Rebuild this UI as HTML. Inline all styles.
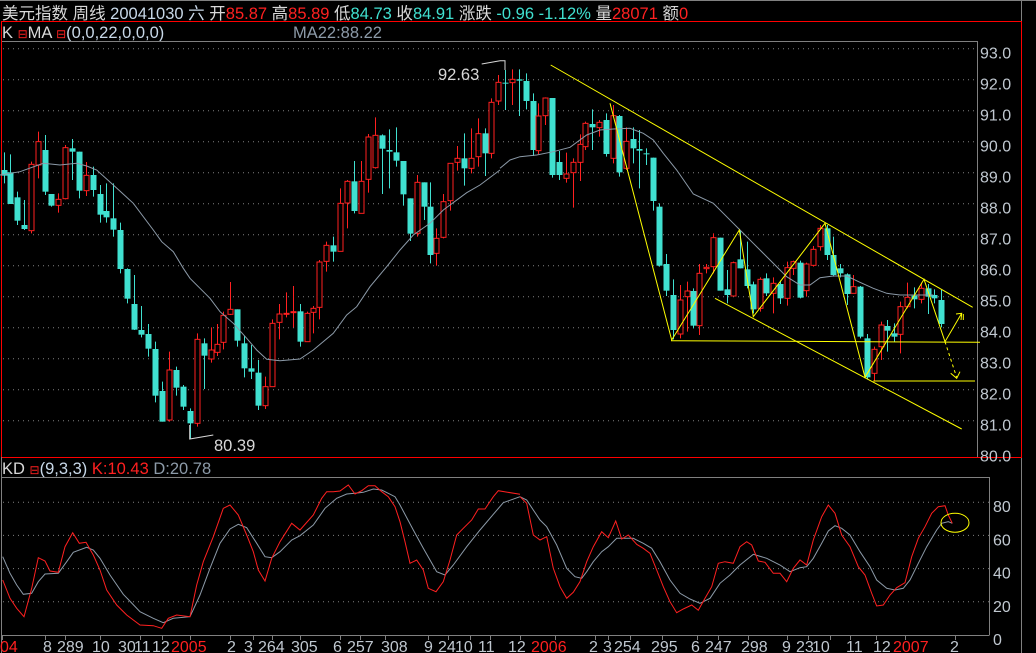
<!DOCTYPE html>
<html><head><meta charset="utf-8"><style>
html,body{margin:0;padding:0;background:#000;width:1036px;height:653px;overflow:hidden}
svg{display:block}
text{font-family:"Liberation Sans","Noto Sans CJK SC",sans-serif;font-size:16.5px}
.ax{font-size:16px}
</style></head><body>
<svg id="s" width="1036" height="653" viewBox="0 0 1036 653">
<rect width="1036" height="653" fill="#000"/>
<line x1="0" y1="0.5" x2="1036" y2="0.5" stroke="#808080"/>
<line x1="1021.5" y1="0" x2="1021.5" y2="653" stroke="#808080"/>
<rect x="1.5" y="21.5" width="1020" height="436" fill="none" stroke="#ff0000"/>
<text x="2" y="19" fill="#d8d8d8">美元指数 周线 <tspan fill="#c8d8e8">20041030 六</tspan> 开<tspan fill="#ff2020">85.87</tspan> 高<tspan fill="#ff2020">85.89</tspan> 低<tspan fill="#40e0d0">84.73</tspan> 收<tspan fill="#40e0d0">84.91</tspan> 涨跌 <tspan fill="#40e0d0"> -0.96 -1.12%</tspan> 量<tspan fill="#ff2020">28071</tspan> 额<tspan fill="#ff2020">0</tspan></text>
<text x="2" y="38" fill="#d8d8d8">K <tspan fill="#ff2020" font-size="12">⊟</tspan>MA <tspan fill="#ff2020" font-size="12">⊟</tspan><tspan fill="#c8d8e8">(0,0,22,0,0,0)</tspan></text>
<text x="293" y="38" fill="#8c9aa8">MA22:88.22</text>
<line x1="2" y1="41.5" x2="977.5" y2="41.5" stroke="#808080"/>
<line x1="977.5" y1="41" x2="977.5" y2="457" stroke="#808080"/>
<text x="2" y="474" fill="#d8d8d8">KD <tspan fill="#ff2020" font-size="12">⊟</tspan><tspan fill="#c8d8e8">(9,3,3)</tspan> <tspan fill="#ff2020">K:10.43</tspan> <tspan fill="#8c9aa8">D:20.78</tspan></text>
<line x1="2" y1="477.5" x2="989.5" y2="477.5" stroke="#808080"/>
<line x1="989.5" y1="477" x2="989.5" y2="635" stroke="#808080"/>
<line x1="2" y1="635.5" x2="989.5" y2="635.5" stroke="#808080"/>
<line x1="1.5" y1="457" x2="1.5" y2="653" stroke="#808080"/>
<g id="g"></g>
</svg>
<script>
var g=document.getElementById('g'),h='';
function Y(p){return 48.7+(93-p)*31}
for(var p=81;p<=93;p++){var y=Y(p);h+='<line x1="3" y1="'+y+'" x2="977" y2="'+y+'" stroke="#808080" stroke-dasharray="1,4"/>';h+='<text class="ax" x="980" y="'+(y+10)+'" fill="#c0c8d0">'+p+'.0</text>';}
h+='<text class="ax" x="980" y="'+(Y(80)+10)+'" fill="#c0c8d0">80.0</text>';
function KY(v){return 635-v*1.66}
[20,40,60,80].forEach(function(v){var y=KY(v);h+='<line x1="3" y1="'+y+'" x2="989" y2="'+y+'" stroke="#808080" stroke-dasharray="1,4"/>';});
[0,20,40,60,80].forEach(function(v){h+='<text class="ax" x="993" y="'+(KY(v)+10)+'" fill="#c0c8d0">'+v+'</text>';});
var A=[[12,0,390,407,337,430],[30,0,397,492,343,492],[52,0,472,542,455,555],[72,0,555,567,480,570],[94,1,373,572,365,580],[115,1,305,375,275,415],[136,0,330,455,285,465],[154,0,462,497,462,500],[175,1,478,496,460,518],[196,1,323,476,315,478],[217,0,325,335,297,420],[238,0,335,452,335,475],[259,1,406,452,366,468],[280,0,405,450,380,470],[301,0,462,524,435,548],[319,0,513,532,430,548],[340,0,535,569,430,590],[361,0,570,687,548,700],[382,0,687,776,685,790],[403,0,792,869,705,870],[424,0,870,884,798,892],[445,0,882,926,852,950],[466,0,927,1067,905,1087],[485,0,1053,1145,1025,1145],[506,1,990,1140,935,1145],[527,0,990,1043,980,1067],[548,0,1040,1100,1035,1110],[569,0,1113,1150,1105,1197],[590,1,898,1150,880,1160],[611,0,910,947,895,1047],[632,1,930,957,862,968],[650,1,913,937,852,948],[670,1,826,907,815,928],[691,1,808,823,726,825],[712,0,808,902,808,920],[733,0,910,985,887,1012],[754,0,985,995,915,1017],[775,0,998,1097,960,1110],[796,1,1040,1097,1010,1107],[815,1,850,1040,838,1040],[836,1,822,847,792,898],[857,1,820,822,757,832],[878,1,815,818,738,862],[899,0,814,905,792,920],[920,1,820,905,815,905],[940,1,805,817,798,880],[958,1,666,802,660,838],[979,1,616,664,605,695],[1000,0,616,635,590,665],[1021,1,490,634,445,634],[1042,1,424,489,420,565],[1063,0,424,513,363,520],[1084,1,424,520,363,520],[1105,1,291,418,282,458],[1124,1,286,383,232,386],[1145,0,286,326,283,462],[1166,0,330,335,268,445],[1187,0,337,362,262,380],[1208,0,363,463,363,497],[1229,0,475,581,475,603],[1250,1,427,580,405,590],[1271,0,427,500,427,540],[1290,0,500,645,427,670],[1309,1,595,640,565,677],[1330,1,485,592,462,595],[1351,1,370,482,370,512],[1372,1,355,367,318,392],[1393,0,355,385,280,437],[1414,1,355,385,265,400],[1435,1,281,350,235,380],[1454,0,280,340,265,408],[1474,1,187,340,175,355],[1494,1,127,183,105,195]];
var B=[[16,0,128,131,90,210],[37,1,118,128,88,195],[57,0,118,122,88,228],[77,0,123,183,100,208],[98,0,183,330,160,348],[115,1,228,332,190,342],[136,1,174,227,172,255],[157,0,174,405,174,413],[177,0,366,405,333,420],[197,1,402,415,338,428],[218,1,367,398,355,503],[239,1,313,367,283,423],[256,1,250,320,245,330],[277,0,252,262,208,330],[297,1,247,263,240,290],[317,0,240,342,220,350],[338,1,227,355,195,370],[358,0,228,397,225,410],[378,1,304,385,262,390],[399,0,297,325,262,370],[417,0,327,332,270,445],[437,0,340,342,325,375],[458,0,353,483,353,512],[478,0,500,677,490,680],[498,0,672,752,642,768],[519,0,765,870,718,898],[539,1,780,882,735,895],[560,1,753,770,725,875],[578,0,753,857,745,865],[598,1,700,857,672,885],[618,1,682,686,672,700],[639,1,593,680,580,700],[659,0,593,752,593,752],[680,0,748,765,690,790],[700,1,668,768,665,770],[720,0,658,685,570,685],[740,0,688,738,605,745],[759,0,733,808,725,820],[779,1,718,805,712,815],[799,0,715,760,700,768],[820,1,730,760,712,820],[840,0,732,775,722,792],[860,1,683,775,665,797],[880,1,665,685,662,705],[899,0,668,773,662,775],[919,1,672,752,668,770],[940,1,628,676,618,680],[960,1,565,620,555,632],[980,0,565,645,555,660],[1000,0,645,705,590,710],[1021,0,685,700,672,712],[1041,0,703,762,700,795],[1060,1,740,760,705,760],[1080,0,740,890,738,895],[1101,0,895,1012,882,1018],[1122,1,928,1000,920,1025],[1142,1,855,920,845,960],[1162,0,858,872,840,935],[1182,0,880,890,850,905],[1201,1,800,883,785,940],[1221,1,772,800,728,805],[1241,0,767,778,742,805],[1262,1,745,778,728,790],[1283,0,745,770,732,822],[1303,0,765,775,748,790],[1323,0,780,852,750,862]];
var C=A.map(function(a){return [a[0]/3].concat(a.slice(1))}).concat(B.map(function(a){return [500+a[0]/3].concat(a.slice(1))}));
C.forEach(function(c){var x=Math.round(c[0])+0.5,bt=40+c[2]/3,bb=40+c[3]/3,wt=40+c[4]/3,wb=40+c[5]/3;
var col=c[1]?'#ff2020':'#40e0d0';
h+='<line x1="'+x+'" y1="'+wt+'" x2="'+x+'" y2="'+wb+'" stroke="'+col+'"/>';
var hh=Math.max(bb-bt,1);
if(c[1])h+='<rect x="'+(x-2.5)+'" y="'+bt+'" width="5" height="'+hh+'" fill="#000" stroke="'+col+'"/>';
else h+='<rect x="'+(x-3)+'" y="'+bt+'" width="6" height="'+hh+'" fill="'+col+'"/>';});
function pl(pts,ox,oy,col,w){return '<polyline fill="none" stroke="'+col+'" stroke-width="'+(w||1)+'" points="'+pts.map(function(p){return (ox+p[0]/3).toFixed(1)+','+(oy+p[1]/3).toFixed(1)}).join(' ')+'"/>';}
var ma1=[[0,405],[60,395],[130,370],[180,375],[230,370],[260,378],[290,390],[340,435],[400,490],[460,570],[485,605],[520,635],[550,685],[570,715],[630,775],[660,815],[700,850],[740,895],[770,930],[800,958],[840,962],[900,957],[940,930],[1000,880],[1040,825],[1070,800],[1110,740],[1160,680],[1200,630],[1240,585],[1290,550],[1330,510],[1400,458],[1440,435],[1500,390]];
var ma2=[[0,385],[30,360],[60,350],[110,345],[160,335],[210,322],[260,285],[300,270],[340,267],[390,265],[430,280],[460,300],[490,340],[530,390],[580,462],[640,490],[700,550],[720,570],[760,610],[810,660],[860,710],[900,735],[930,735],[960,713],[1000,708],[1040,708],[1080,727],[1120,745],[1160,760],[1200,765],[1250,765],[1300,765]];
h+=pl(ma1,0,40,'#8c9aa8');h+=pl(ma2,500,40,'#8c9aa8');
var Yl='#ffff00';
h+=pl([[152,75],[1418,802]],500,40,Yl);
h+=pl([[330,190],[515,900],[718,570],[760,830],[975,550],[1095,1012],[1272,718],[1335,905],[1385,820]],500,40,Yl);
h+=pl([[1368,822],[1385,820],[1383,840]],500,40,Yl);
h+=pl([[1390,822],[1390,840]],500,40,Yl);
h+=pl([[513,902],[1440,907]],500,40,Yl);
h+=pl([[645,775],[1385,1167]],500,40,Yl);
h+=pl([[1120,1023],[1425,1023]],500,40,Yl);
h+='<polyline fill="none" stroke="#ffff00" stroke-dasharray="3,3" points="'+(500+1335/3)+','+(40+905/3)+' '+(500+1370/3)+','+(40+1012/3)+'"/>';
h+=pl([[1352,1000],[1370,1015],[1380,995]],500,40,Yl);
h+='<text x="438" y="80" fill="#d8d8d8">92.63</text>';
h+=pl([[1445,72],[1500,62]],0,40,'#d8d8d8');h+='<polyline fill="none" stroke="#d8d8d8" points="500,60.7 505,60.7 505,70"/>';
h+='<text x="214" y="451" fill="#d8d8d8">80.39</text>';
h+=pl([[569,1155],[569,1197],[640,1185]],0,40,'#d8d8d8');
var K1=[[8,375],[30,430],[50,460],[72,485],[95,400],[115,308],[135,318],[150,348],[175,352],[195,275],[218,233],[238,265],[258,262],[280,300],[300,345],[320,405],[350,450],[380,480],[420,510],[460,512],[485,520],[505,490],[530,480],[570,485],[590,390],[610,320],[640,245],[670,160],[690,150],[715,180],[740,240],[760,290],[775,345],[795,378],[815,310],[840,260],[875,205],[900,225],[940,180],[965,130],[980,110],[1000,110],[1020,108],[1045,90],[1065,117],[1085,107],[1105,92],[1125,92],[1145,110],[1165,125],[1185,155],[1200,200],[1215,260],[1230,325],[1250,315],[1270,345],[1285,400],[1308,410],[1330,380],[1350,315],[1370,240],[1390,220],[1415,195],[1435,162],[1455,162],[1480,125],[1495,107],[1560,118]];
var K2=[[0,125],[20,145],[40,240],[60,255],[80,245],[100,340],[120,395],[140,430],[160,412],[180,380],[200,320],[220,275],[245,230],[265,248],[287,198],[305,252],[325,240],[350,268],[370,280],[390,295],[410,345],[430,395],[450,440],[470,473],[490,462],[515,450],[535,466],[555,430],[575,395],[595,325],[615,320],[640,325],[660,275],[680,260],[695,270],[715,318],[735,322],[760,355],[780,355],[800,380],[820,340],[840,315],[860,330],[880,255],[905,185],[925,150],[945,175],[965,240],[990,275],[1015,335],[1035,360],[1055,415],[1070,453],[1090,450],[1110,420],[1130,398],[1155,383],[1175,305],[1195,250],[1215,215],[1235,175],[1255,155],[1275,152],[1285,180],[1297,205]];
var D1=[[8,305],[30,355],[50,390],[70,418],[95,415],[115,380],[135,357],[175,355],[200,320],[220,292],[260,277],[280,285],[300,310],[330,360],[370,418],[420,470],[460,490],[490,503],[520,490],[570,485],[600,420],[630,340],[660,265],[690,222],[715,208],[740,218],[770,265],[795,305],[815,308],[840,290],[875,255],[900,242],[940,210],[975,160],[1010,130],[1040,117],[1065,115],[1090,112],[1120,102],[1145,105],[1185,125],[1200,150],[1240,225],[1270,280],[1310,350],[1335,360],[1360,330],[1400,275],[1440,225],[1480,178],[1510,143],[1560,125]];
var D2=[[0,125],[20,135],[40,165],[60,195],[80,215],[110,270],[140,340],[165,365],[185,370],[200,350],[220,320],[245,290],[265,275],[290,250],[320,250],[340,250],[370,265],[395,280],[420,320],[450,375],[480,415],[510,432],[540,445],[570,430],[600,385],[630,360],[660,330],[700,298],[740,310],[780,330],[810,350],[840,338],[860,335],[880,310],[905,265],[925,228],[945,212],[965,220],[990,240],[1020,290],[1050,335],[1070,375],[1100,400],[1125,405],[1150,400],[1170,375],[1195,325],[1220,275],[1250,225],[1265,205],[1285,200],[1297,205]];
h+=pl(D1,0,455,'#8c9aa8');h+=pl(D2,520,455,'#8c9aa8');
h+=pl(K1,0,455,'#ff2020');h+=pl(K2,520,455,'#ff2020');
h+='<ellipse cx="955" cy="522.7" rx="14" ry="9.5" fill="none" stroke="#ffff00"/>';
var L=[[0,'04',1],[43,'8',0],[57,'289',0],[92,'10',0],[118,'30',0],[134,'11',0],[152,'12',0],[171,'2005',1],[227,'2',0],[244,'3',0],[258,'264',0],[291,'305',0],[333,'6',0],[347,'257',0],[381,'308',0],[424,'9',0],[438,'24',0],[455,'10',0],[478,'11',0],[508,'12',0],[531,'2006',1],[589,'2',0],[603,'3',0],[614,'254',0],[651,'295',0],[691,'6',0],[705,'247',0],[741,'298',0],[782,'9',0],[796,'23',0],[812,'10',0],[846,'11',0],[873,'12',0],[893,'2007',1],[950,'2',0]];
L.forEach(function(l){h+='<text class="ax" x="'+l[0]+'" y="652" fill="'+(l[2]?'#ff2020':'#c0c8d0')+'">'+l[1]+'</text>';});
[2,45,65,100,140,162,190,230,253,272,300,340,360,385,428,448,470,490,520,555,595,608,630,662,697,718,748,787,808,830,850,876,905,955].forEach(function(x){h+='<line x1="'+x+'.5" y1="635" x2="'+x+'.5" y2="640" stroke="#808080"/>';});
g.innerHTML=h;
</script>
</body></html>
